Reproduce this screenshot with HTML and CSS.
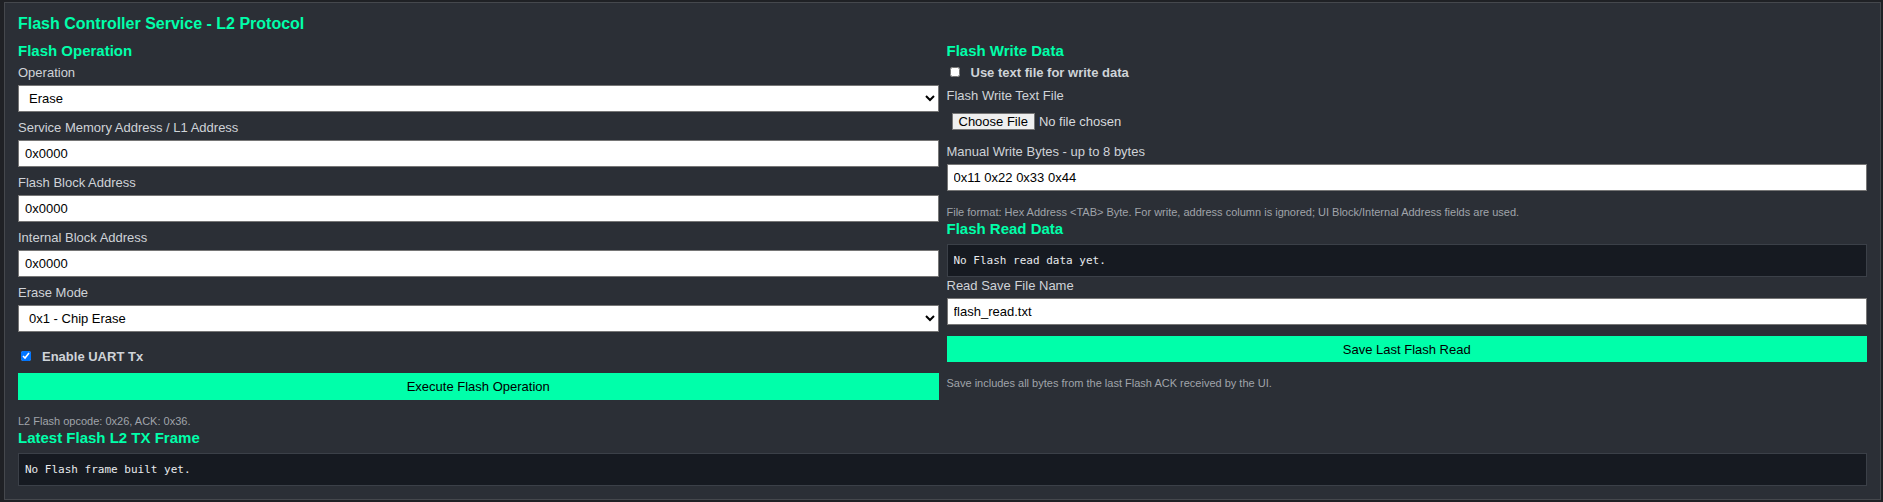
FILE: index.html
```html
<!DOCTYPE html>
<html lang="en">
<head>
  <meta charset="UTF-8" />
  <meta name="viewport" content="width=device-width, initial-scale=1.0" />
  <title>Flash Controller Service</title>
  <link rel="stylesheet" href="styles.css">
</head>
<body>
  <div class="panel">
    <h2 class="panel-title">Flash Controller Service - L2 Protocol</h2>

    <div class="columns">
      <div class="col">
        <h3>Flash Operation</h3>
        <label class="field-label" for="op">Operation</label>
        <select id="op" class="field">
          <option>Erase</option>
          <option>Write</option>
          <option>Read</option>
        </select>

        <label class="field-label" for="memAddr">Service Memory Address / L1 Address</label>
        <input type="text" id="memAddr" class="field" value="0x0000">

        <label class="field-label" for="blockAddr">Flash Block Address</label>
        <input type="text" id="blockAddr" class="field" value="0x0000">

        <label class="field-label" for="intAddr">Internal Block Address</label>
        <input type="text" id="intAddr" class="field" value="0x0000">

        <label class="field-label" for="eraseMode">Erase Mode</label>
        <select id="eraseMode" class="field">
          <option>0x1 - Chip Erase</option>
          <option>0x2 - Block Erase</option>
        </select>

        <label class="check-row"><input type="checkbox" id="uartTx" checked> Enable UART Tx</label>

        <button class="btn" onclick="executeFlash()">Execute Flash Operation</button>
        <p class="hint">L2 Flash opcode: 0x26, ACK: 0x36.</p>
      </div>

      <div class="col">
        <h3>Flash Write Data</h3>
        <label class="check-row top"><input type="checkbox" id="useFile"> Use text file for write data</label>

        <label class="field-label" for="writeFile">Flash Write Text File</label>
        <div class="file-wrap">
          <input type="file" id="writeFile">
        </div>

        <label class="field-label" for="writeBytes">Manual Write Bytes - up to 8 bytes</label>
        <input type="text" id="writeBytes" class="field" value="0x11 0x22 0x33 0x44">
        <p class="hint">File format: Hex Address &lt;TAB&gt; Byte. For write, address column is ignored; UI Block/Internal Address fields are used.</p>

        <h3 class="section">Flash Read Data</h3>
        <pre class="frame" id="readData">No Flash read data yet.</pre>

        <label class="field-label snug" for="saveName">Read Save File Name</label>
        <input type="text" id="saveName" class="field" value="flash_read.txt">

        <button class="btn save" onclick="saveRead()">Save Last Flash Read</button>
        <p class="hint">Save includes all bytes from the last Flash ACK received by the UI.</p>
      </div>
    </div>

    <h3 class="section">Latest Flash L2 TX Frame</h3>
    <pre class="frame" id="txFrame">No Flash frame built yet.</pre>
  </div>

  <script>
    function executeFlash() {
      document.getElementById("txFrame").textContent = "No Flash frame built yet.";
    }

    function saveRead() {
      document.getElementById("readData").textContent = "No Flash read data yet.";
    }
  </script>
</body>
</html>
```

FILE: styles.css
```css
* { box-sizing: border-box; }
html, body {
  margin: 0;
  background-color: #1f2125;
  font-family: "Liberation Sans", Arial, sans-serif;
  color: #cfd3d8;
}
body { padding: 2px 2px 2px 4px; }

.panel {
  background: #2b2f36;
  border: 1px solid #45484d;
  padding: 11px 13px 13px 13px;
}
.panel-title {
  margin: 0;
  font-size: 16px;
  line-height: 20px;
  color: #00ffaa;
}
h3 {
  margin: 8px 0 3px;
  font-size: 15px;
  line-height: 18px;
  color: #00ffaa;
}
h3.section { margin: 1px 0 6px; }

.columns {
  display: grid;
  grid-template-columns: 1fr 1fr;
  column-gap: 8px;
}

.field-label {
  display: block;
  font-size: 13px;
  line-height: 16px;
  margin: 5px 0 4px;
}
.field-label.snug { margin-top: 1px; }

.field {
  display: block;
  width: 100%;
  height: 27px;
  margin: 0 0 8px;
  padding: 0 6px;
  border: 1px solid #767676;
  border-radius: 0;
  background: #fff;
  color: #000;
  font-family: "Liberation Sans", Arial, sans-serif;
  font-size: 13px;
}

.check-row {
  display: flex;
  align-items: center;
  height: 18px;
  margin: 15px 0 8px;
  font-size: 13px;
  font-weight: bold;
}
.check-row.top { margin: 0 0 7px; }
.check-row input {
  width: 10px;
  height: 10px;
  margin: 0 11px 0 3px;
}

.file-wrap {
  padding: 4px 5px 4px;
  margin-bottom: 10px;
}
.file-wrap input {
  font-family: "Liberation Sans", Arial, sans-serif;
  font-size: 13px;
  color: #d6d9dd;
}
.file-wrap input::file-selector-button {
  font-family: "Liberation Sans", Arial, sans-serif;
  font-size: 13px;
  line-height: 15px;
  padding: 0 6px;
  margin-right: 4px;
  border: 1px solid #767676;
  border-radius: 0;
  background: #efefef;
  color: #000;
}

.btn {
  display: block;
  width: 100%;
  height: 27px;
  margin: 0;
  border: none;
  background-color: #00ffaa;
  color: #000;
  font-family: "Liberation Sans", Arial, sans-serif;
  font-size: 13px;
  cursor: pointer;
}
.btn.save { margin-top: 11px; height: 26px; }
.btn:hover { background-color: #00e699; }

.hint {
  margin: 14px 0 0;
  font-size: 11px;
  line-height: 14px;
  color: #a0a4aa;
}

.frame {
  margin: 0;
  padding: 8px 6px;
  background: #161a21;
  border: 1px solid #3b4048;
  color: #e8eaed;
  font-family: "DejaVu Sans Mono", "Liberation Mono", monospace;
  font-size: 11px;
  line-height: 15px;
}
```
